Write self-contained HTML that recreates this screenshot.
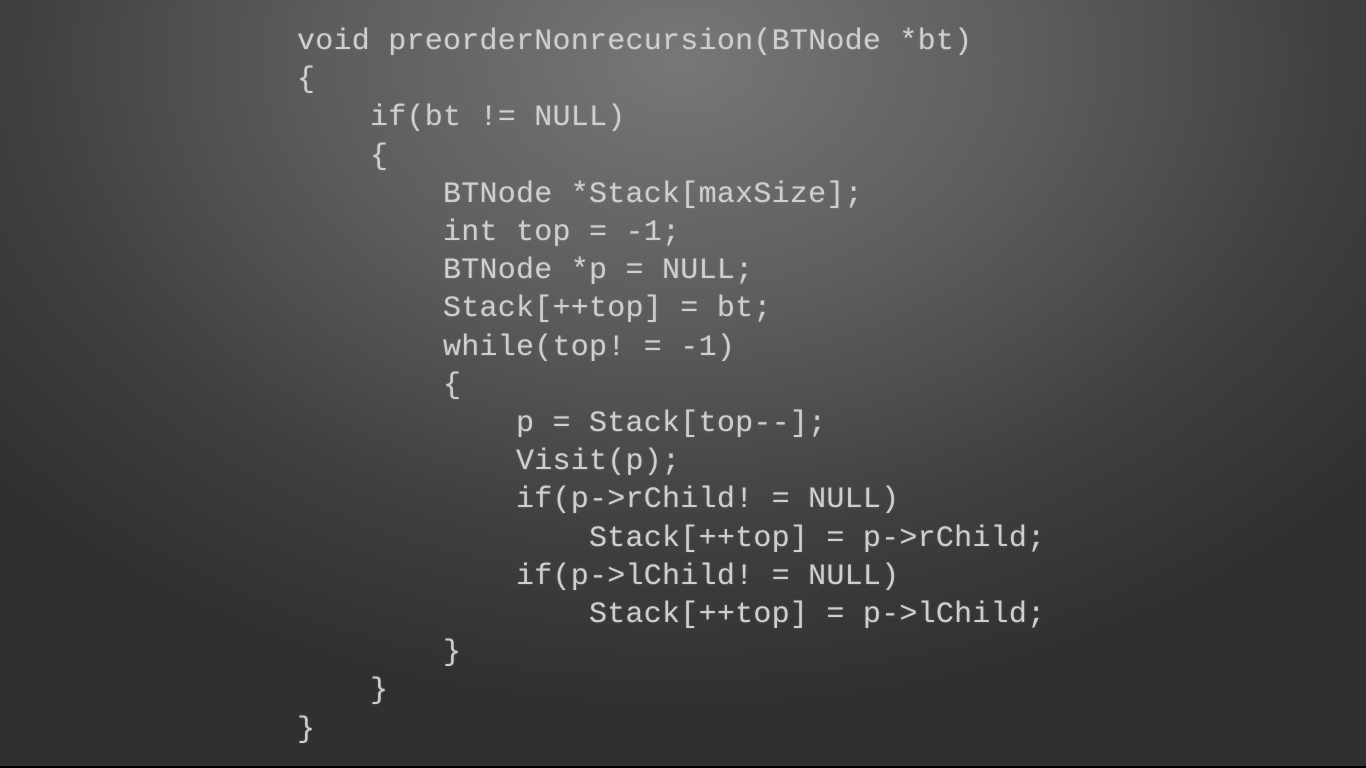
<!DOCTYPE html>
<html><head><meta charset="utf-8"><style>
html,body{margin:0;padding:0;width:1366px;height:768px;overflow:hidden;background:#000}
.bg{position:absolute;left:0;top:0;width:1366px;height:766px;
background:radial-gradient(ellipse 900px 650px at 680px 60px,#777 0%,#5c5c5c 40%,#3e3e3e 75%,#303030 100%);}
pre{position:absolute;left:297px;top:23px;margin:0;font-family:"Liberation Mono",monospace;font-size:30px;line-height:38.2px;letter-spacing:0.25px;color:#cfcfcf;text-shadow:0 0 2px rgba(200,200,200,0.3)}
</style></head><body><div class="bg"></div>
<pre>void preorderNonrecursion(BTNode *bt)
{
    if(bt != NULL)
    {
        BTNode *Stack[maxSize];
        int top = -1;
        BTNode *p = NULL;
        Stack[++top] = bt;
        while(top! = -1)
        {
            p = Stack[top--];
            Visit(p);
            if(p-&gt;rChild! = NULL)
                Stack[++top] = p-&gt;rChild;
            if(p-&gt;lChild! = NULL)
                Stack[++top] = p-&gt;lChild;
        }
    }
}</pre>
</body></html>
